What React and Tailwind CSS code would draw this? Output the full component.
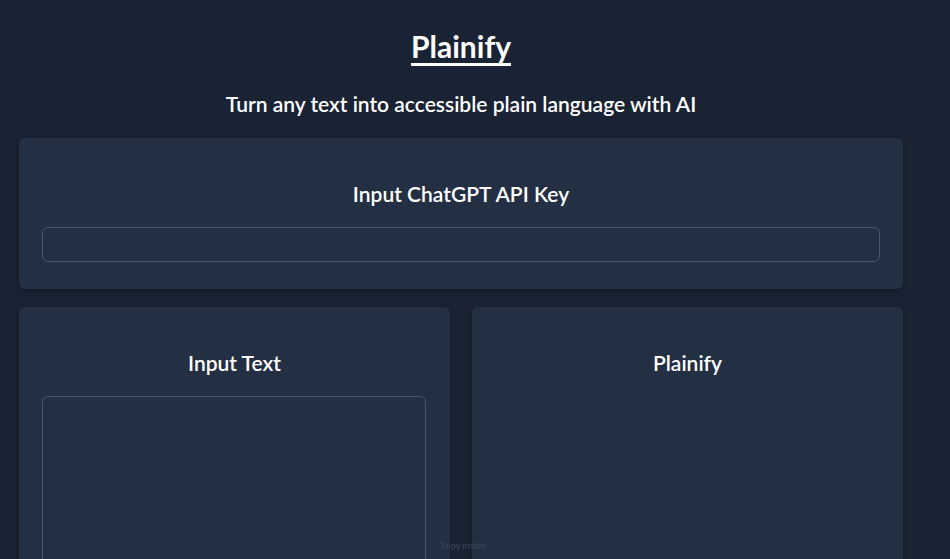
import React from 'react';

function Card({ children, className = '' }) {
  return (
    <div className={`bg-[#232f43] rounded-md shadow-[0_2px_4px_rgba(0,0,0,0.25)] px-[23px] pt-[42px] ${className}`}>
      {children}
    </div>
  );
}

export default function App() {
  return (
    <div className="min-h-screen bg-[#1a2333] text-white font-['Lato',sans-serif] overflow-hidden">
      <div className="ml-[19px] w-[884px] pt-[28px]">
        <h1 className="text-center text-[30px] leading-[36px] font-bold underline underline-offset-[5px] decoration-[3px]">
          Plainify
        </h1>
        <p className="text-center text-[21px] leading-[28px] font-semibold mt-[26px]">
          Turn any text into accessible plain language with AI
        </p>

        {/* API key */}
        <Card className="mt-[20px] pb-[27px]">
          <h2 className="text-center text-[21px] leading-[28px] font-semibold">Input ChatGPT API Key</h2>
          <input
            type="password"
            className="mt-[19px] block w-full h-[35px] rounded-md border border-[#4a5568] bg-transparent px-3 text-sm outline-none"
          />
        </Card>

        {/* Input / output */}
        <div className="grid grid-cols-2 gap-[22px] mt-[18px]">
          <Card className="pb-[27px]">
            <h2 className="text-center text-[21px] leading-[28px] font-semibold">Input Text</h2>
            <textarea className="mt-[19px] block w-[384px] h-[220px] rounded-md border border-[#4a5568] bg-transparent p-3 text-sm outline-none resize-none" />
          </Card>
          <Card className="pb-[27px]">
            <h2 className="text-center text-[21px] leading-[28px] font-semibold">Plainify</h2>
          </Card>
        </div>
      </div>

      <div className="fixed left-[440px] top-[540px] text-[9px] leading-[12px] text-[#3d4759] font-['Lato',sans-serif]">
        Talpy inside
      </div>
    </div>
  );
}
